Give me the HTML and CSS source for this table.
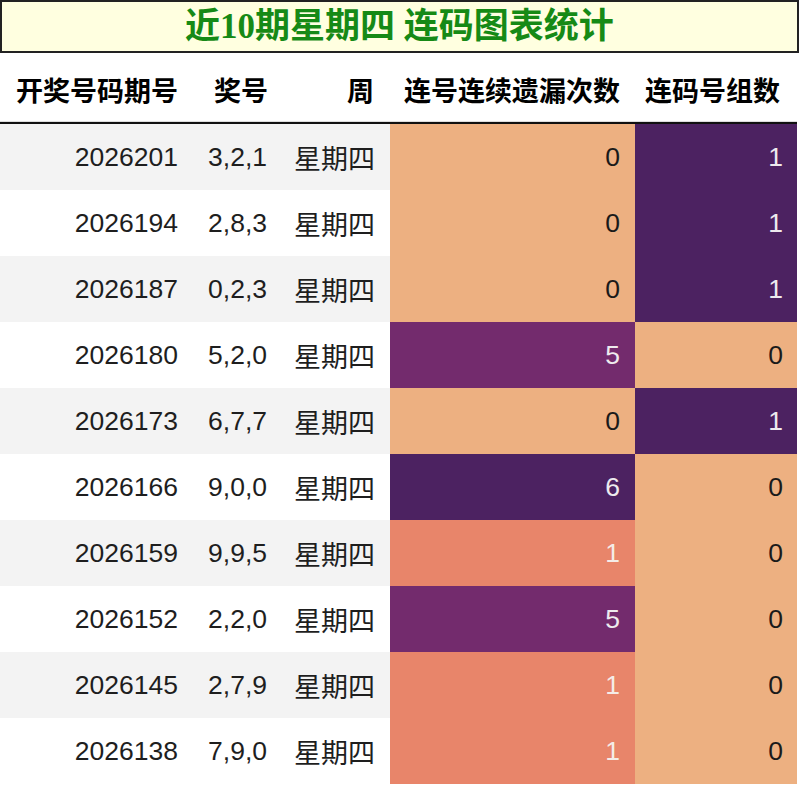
FILE: index.html
```html
<!DOCTYPE html>
<html lang="zh">
<head>
<meta charset="utf-8">
<title>近10期星期四 连码图表统计</title>
<link rel="stylesheet" href="styles.css">
</head>
<body>
<div class="title">近10期星期四 连码图表统计</div>
<div class="grid">
  <div class="th">开奖号码期号</div>
  <div class="th">奖号</div>
  <div class="th">周</div>
  <div class="th">连号连续遗漏次数</div>
  <div class="th">连码号组数</div>

  <div class="td odd">2026201</div><div class="td odd">3,2,1</div><div class="td odd cjk">星期四</div><div class="td c0">0</div><div class="td c6">1</div>
  <div class="td">2026194</div><div class="td">2,8,3</div><div class="td cjk">星期四</div><div class="td c0">0</div><div class="td c6">1</div>
  <div class="td odd">2026187</div><div class="td odd">0,2,3</div><div class="td odd cjk">星期四</div><div class="td c0">0</div><div class="td c6">1</div>
  <div class="td">2026180</div><div class="td">5,2,0</div><div class="td cjk">星期四</div><div class="td c5">5</div><div class="td c0">0</div>
  <div class="td odd">2026173</div><div class="td odd">6,7,7</div><div class="td odd cjk">星期四</div><div class="td c0">0</div><div class="td c6">1</div>
  <div class="td">2026166</div><div class="td">9,0,0</div><div class="td cjk">星期四</div><div class="td c6">6</div><div class="td c0">0</div>
  <div class="td odd">2026159</div><div class="td odd">9,9,5</div><div class="td odd cjk">星期四</div><div class="td c1">1</div><div class="td c0">0</div>
  <div class="td">2026152</div><div class="td">2,2,0</div><div class="td cjk">星期四</div><div class="td c5">5</div><div class="td c0">0</div>
  <div class="td odd">2026145</div><div class="td odd">2,7,9</div><div class="td odd cjk">星期四</div><div class="td c1">1</div><div class="td c0">0</div>
  <div class="td">2026138</div><div class="td">7,9,0</div><div class="td cjk">星期四</div><div class="td c1">1</div><div class="td c0">0</div>
</div>
</body>
</html>
```
FILE: styles.css
```css
html, body {
  margin: 0;
  padding: 0;
  background: #ffffff;
}

.title {
  box-sizing: border-box;
  width: 799px;
  height: 53px;
  border: 2px solid #222;
  background: #ffffe0;
  color: #168a16;
  font-family: "Liberation Serif", "Noto Sans CJK SC", serif;
  font-weight: bold;
  font-size: 35px;
  line-height: 49px;
  text-align: center;
  white-space: pre;
}

.grid {
  display: grid;
  grid-template-columns: 190px 88px 112px 245px 162px;
  grid-template-rows: 71px repeat(10, 66px);
  width: 797px;
  font-family: "Liberation Sans", "Noto Sans CJK SC", sans-serif;
  font-size: 26px;
}

.th {
  box-sizing: border-box;
  padding-top: 4px;
  border-bottom: 2px solid #111;
  box-shadow: inset 0 -1px 0 #ddd;
  display: flex;
  align-items: center;
  justify-content: flex-end;
  font-weight: bold;
  color: #000;
  font-size: 27px;
  white-space: nowrap;
}

.th:nth-child(1) { padding-right: 12px; }
.th:nth-child(2) { padding-right: 10px; }
.th:nth-child(3) { padding-right: 16px; }
.th:nth-child(4) { padding-right: 15px; }
.th:nth-child(5) { padding-right: 17px; }

.td {
  display: flex;
  align-items: center;
  justify-content: flex-end;
  color: #1e1e1e;
  font-size: 26.5px;
  white-space: nowrap;
}

.td:nth-child(5n+1) { padding-right: 12px; }
.td:nth-child(5n+2) { padding-right: 11px; }
.td:nth-child(5n+3) { padding-right: 15px; }
.td:nth-child(5n+4) { padding-right: 15px; }
.td:nth-child(5n) { padding-right: 14px; }

.odd { background: #f3f3f3; }

.cjk { font-size: 27px; }

.c0 { background: #edb081; color: #1a1a1a; }
.c1 { background: #e8856a; color: #f4ece8; }
.c5 { background: #732b6d; color: #eeeaee; }
.c6 { background: #4c2261; color: #eeeaee; }
```
